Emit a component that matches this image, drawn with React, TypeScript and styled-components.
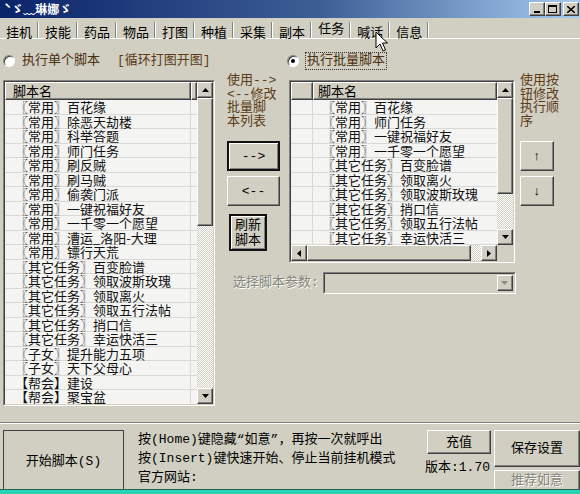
import styled, { createGlobalStyle, css } from 'styled-components'
import { Fragment } from 'react'

const BG = '#d1cfc1'

const GlobalStyle = createGlobalStyle`
  html, body {
    margin: 0;
    padding: 0;
    background: ${BG};
  }
  body {
    font-family: "Liberation Mono", "Noto Sans CJK SC", monospace;
    font-size: 13px;
    color: #000;
  }
  * {
    box-sizing: border-box;
  }
`

const raised = css`
  background: ${BG};
  border: 1px solid;
  border-color: #fff #404040 #404040 #fff;
  box-shadow: inset -1px -1px #808080, inset 1px 1px ${BG};
`

const Window = styled.div`
  position: relative;
  width: 580px;
  height: 494px;
  overflow: hidden;
  background: ${BG};
  display: flex;
  flex-direction: column;
`

const TitleBar = styled.div`
  height: 18px;
  display: flex;
  align-items: center;
  justify-content: space-between;
  padding: 0 1px 0 4px;
  background: linear-gradient(to right, #0a246a 0%, #3d5e95 55%, #a6caf0 100%);
`

const TitleText = styled.span`
  color: #fff;
  font-family: "Noto Sans CJK SC", sans-serif;
  font-weight: bold;
  font-size: 12px;
  line-height: 16px;
`

const WinButtons = styled.div`
  display: flex;
  align-items: center;
`

const WinBtn = styled.div<{ $gap?: boolean }>`
  ${raised};
  width: 16px;
  height: 14px;
  display: flex;
  align-items: center;
  justify-content: center;
  margin-left: ${(p) => (p.$gap ? '2px' : '0')};
`

const TabBar = styled.div`
  height: 21px;
  display: flex;
  align-items: flex-start;
  border-bottom: 1px solid #fff;
`

const Tab = styled.div<{ $active?: boolean }>`
  padding: 0 5px 0 6px;
  font-size: 13px;
  line-height: 16px;
  font-family: "Noto Sans CJK SC", sans-serif;
  margin-top: ${(p) => (p.$active ? '2px' : '6px')};
`

const TabSep = styled.div`
  width: 2px;
  height: 16px;
  border-left: 1px solid #808080;
  border-right: 1px solid #fff;
  margin-top: 4px;
`

const Main = styled.div`
  height: 367px;
  display: grid;
  grid-template-columns: 212px 74px 226px 1fr;
  grid-template-rows: 41px 183px 1fr;
  padding-left: 3px;
`

const RadioLine = styled.label<{ $col: string; $shift?: number }>`
  grid-column: ${(p) => p.$col};
  grid-row: 1;
  margin-left: ${(p) => p.$shift ?? 0}px;
  display: flex;
  align-items: center;
  gap: 7px;
  padding-top: 2px;
  color: #4a2e10;
  font-size: 13px;
  line-height: 16px;
`

const RadioDot = styled.span<{ $checked?: boolean }>`
  position: relative;
  flex-shrink: 0;
  width: 12px;
  height: 12px;
  border-radius: 50%;
  background: #fff;
  border: 1px solid;
  border-color: #808080 #fff #fff #808080;
  box-shadow: inset 1px 1px #404040;
  ${(p) =>
    p.$checked &&
    css`
      &::after {
        content: '';
        position: absolute;
        left: 3px;
        top: 3px;
        width: 4px;
        height: 4px;
        border-radius: 50%;
        background: #000;
      }
    `}
`

const Note = styled.span`
  margin-left: 10px;
  color: #5c3b17;
`

const Focused = styled.span`
  outline: 1px dotted #333;
  padding: 0 1px;
`

const ListBox = styled.div<{ $area: string; $h: number }>`
  grid-area: ${(p) => p.$area};
  height: ${(p) => p.$h}px;
  border: 1px solid;
  border-color: #808080 #fff #fff #808080;
  display: flex;
`

const ListInner = styled.div`
  flex: 1;
  min-width: 0;
  border: 1px solid;
  border-color: #404040 ${BG} ${BG} #404040;
  background: #f4f4f2;
  display: flex;
  flex-direction: column;
`

const ListTop = styled.div`
  flex: 1;
  min-height: 0;
  display: flex;
`

const ListMain = styled.div`
  flex: 1;
  min-width: 0;
  display: flex;
  flex-direction: column;
`

const HeaderRow = styled.div`
  height: 18px;
  display: flex;
  flex-shrink: 0;
`

const HeaderCell = styled.div<{ $w?: number; $pad?: number }>`
  ${raised};
  width: ${(p) => (p.$w ? `${p.$w}px` : 'auto')};
  flex: ${(p) => (p.$w ? '0 0 auto' : '1')};
  padding-left: ${(p) => p.$pad ?? 0}px;
  font-family: "Noto Sans CJK SC", sans-serif;
  font-size: 13px;
  line-height: 15px;
`

const Rows = styled.div`
  flex: 1;
  overflow: hidden;
`

const Row = styled.div`
  height: 14.5px;
  display: flex;
  border-bottom: 1px solid #d8d8d4;
  white-space: nowrap;
`

const RowHead = styled.div`
  width: 22px;
  flex-shrink: 0;
  border-right: 1px solid #d8d8d4;
`

const RowText = styled.div<{ $pad: number; $w?: number }>`
  padding-left: ${(p) => p.$pad}px;
  width: ${(p) => (p.$w ? `${p.$w}px` : 'auto')};
  flex: ${(p) => (p.$w ? '0 0 auto' : '1')};
  border-right: ${(p) => (p.$w ? '1px solid #d8d8d4' : 'none')};
  font-family: "Noto Sans CJK SC", sans-serif;
  font-size: 13px;
  line-height: 13.5px;
  color: #111;
`

const VScroll = styled.div`
  width: 16px;
  flex-shrink: 0;
  display: flex;
  flex-direction: column;
`

const HScroll = styled.div`
  height: 16px;
  flex-shrink: 0;
  display: flex;
`

const ScrollBtn = styled.div`
  ${raised};
  width: 16px;
  height: 16px;
  flex-shrink: 0;
  display: flex;
  align-items: center;
  justify-content: center;
`

const Thumb = styled.div<{ $size: number }>`
  ${raised};
  flex: 0 0 ${(p) => p.$size}px;
`

const Track = styled.div`
  flex: 1;
  background: repeating-conic-gradient(#fff 0 25%, ${BG} 0 50%) 0 0 / 2px 2px;
`

const Corner = styled.div`
  width: 16px;
  background: ${BG};
`

const MidCol = styled.div`
  grid-column: 2;
  grid-row: 1 / 3;
  padding: 35px 0 0 12px;
  display: flex;
  flex-direction: column;
  align-items: flex-start;
`

const Hint = styled.div<{ $w: number }>`
  color: #5c3b17;
  font-size: 13px;
  line-height: 13.5px;
  max-width: ${(p) => p.$w}px;
  word-break: break-all;
`

const PushButton = styled.div<{ $w: number; $h: number; $strong?: boolean; $mt: number; $ml?: number }>`
  ${raised};
  width: ${(p) => p.$w}px;
  height: ${(p) => p.$h}px;
  margin-top: ${(p) => p.$mt}px;
  margin-left: ${(p) => p.$ml ?? 0}px;
  flex-shrink: 0;
  display: flex;
  align-items: center;
  justify-content: center;
  text-align: center;
  font-size: 13px;
  line-height: 15px;
  ${(p) =>
    p.$strong &&
    css`
      border: 2px solid #111;
      box-shadow: inset 1px 1px #fff, inset -1px -1px #808080;
    `}
`

const SideCol = styled.div`
  grid-column: 4;
  grid-row: 1 / 3;
  padding: 35px 0 0 5px;
  display: flex;
  flex-direction: column;
  align-items: flex-start;
`

const ParamRow = styled.div`
  grid-column: 2 / 4;
  grid-row: 3;
  align-self: start;
  display: flex;
  align-items: center;
  padding: 9px 0 0 18px;
`

const Disabled = styled.span`
  flex-shrink: 0;
  white-space: nowrap;
  color: #85857a;
  text-shadow: 1px 1px #fff;
  font-size: 13px;
  line-height: 16px;
`

const Combo = styled.div`
  margin-left: 4px;
  width: 193px;
  flex-shrink: 0;
  height: 22px;
  border: 1px solid;
  border-color: #808080 #fff #fff #808080;
  display: flex;
`

const ComboInner = styled.div`
  flex: 1;
  border: 1px solid;
  border-color: #404040 ${BG} ${BG} #404040;
  display: flex;
  justify-content: flex-end;
  padding: 1px;
`

const Separator = styled.div`
  margin-top: 16px;
  height: 2px;
  border-top: 1px solid #808080;
  border-bottom: 1px solid #fff;
`

const Bottom = styled.div`
  height: 65px;
  display: flex;
  align-items: flex-start;
  padding: 6px 0 0 3px;
`

const StartBox = styled.div`
  width: 121px;
  height: 62px;
  border: 1px solid #404040;
  display: flex;
  align-items: center;
  justify-content: center;
  font-size: 13px;
  padding-bottom: 4px;
`

const Info = styled.div`
  flex: 1;
  margin-left: 14px;
  font-size: 13px;
  line-height: 19px;
  white-space: nowrap;
`

const ChargeCol = styled.div`
  width: 64px;
  display: flex;
  flex-direction: column;
  align-items: center;
`

const Version = styled.div`
  margin-top: 6px;
  margin-left: -3px;
  font-size: 13px;
  line-height: 16px;
`

const SaveCol = styled.div`
  width: 86px;
  margin-left: 3px;
  flex-shrink: 0;
  display: flex;
  flex-direction: column;
`

const Taskbar = styled.div`
  height: 5px;
  background: #27d3b3;
  border-top: 1px solid #22645a;
`

const Cursor = styled.svg`
  position: absolute;
  left: 375px;
  top: 31px;
`

type Dir = 'up' | 'down' | 'left' | 'right'

function Arrow({ dir, muted }: { dir: Dir; muted?: boolean }) {
  const vertical = dir === 'up' || dir === 'down'
  const pts = {
    up: '0,4 7,4 3.5,0',
    down: '0,0 7,0 3.5,4',
    left: '4,0 4,7 0,3.5',
    right: '0,0 0,7 4,3.5',
  }[dir]
  return (
    <svg width={vertical ? 7 : 4} height={vertical ? 4 : 7}>
      <polygon points={pts} fill={muted ? '#8a8a80' : '#000'} />
    </svg>
  )
}

const tabs = ['挂机', '技能', '药品', '物品', '打图', '种植', '采集', '副本', '任务', '喊话', '信息']

const allScripts = [
  '〖常用〗百花缘',
  '〖常用〗除恶天劫楼',
  '〖常用〗科举答题',
  '〖常用〗师门任务',
  '〖常用〗刷反贼',
  '〖常用〗刷马贼',
  '〖常用〗偷袭门派',
  '〖常用〗一键祝福好友',
  '〖常用〗一千零一个愿望',
  '〖常用〗漕运_洛阳-大理',
  '〖常用〗镖行天荒',
  '〖其它任务〗百变脸谱',
  '〖其它任务〗领取波斯玫瑰',
  '〖其它任务〗领取离火',
  '〖其它任务〗领取五行法帖',
  '〖其它任务〗捎口信',
  '〖其它任务〗幸运快活三',
  '〖子女〗提升能力五项',
  '〖子女〗天下父母心',
  '【帮会】建设',
  '【帮会】聚宝盆',
]

const batchScripts = [
  '〖常用〗百花缘',
  '〖常用〗师门任务',
  '〖常用〗一键祝福好友',
  '〖常用〗一千零一个愿望',
  '〖其它任务〗百变脸谱',
  '〖其它任务〗领取离火',
  '〖其它任务〗领取波斯玫瑰',
  '〖其它任务〗捎口信',
  '〖其它任务〗领取五行法帖',
  '〖其它任务〗幸运快活三',
]

export default function App() {
  return (
    <Window>
      <GlobalStyle />
      <TitleBar>
        <TitleText>ˋゞ﹏琳娜ゞ</TitleText>
        <WinButtons>
          <WinBtn>
            <svg width="8" height="8">
              <rect x="1" y="6" width="6" height="2" fill="#000" />
            </svg>
          </WinBtn>
          <WinBtn>
            <svg width="10" height="9">
              <rect x="0.5" y="0.5" width="8" height="7" fill="none" stroke="#000" />
              <rect x="0" y="0" width="9" height="2" fill="#000" />
            </svg>
          </WinBtn>
          <WinBtn $gap>
            <svg width="8" height="7">
              <path d="M0 0 L8 7 M8 0 L0 7" stroke="#000" strokeWidth="1.6" />
            </svg>
          </WinBtn>
        </WinButtons>
      </TitleBar>

      <TabBar>
        {tabs.map((t, i) => (
          <Fragment key={t}>
            <Tab $active={i === 8}>{t}</Tab>
            <TabSep />
          </Fragment>
        ))}
      </TabBar>

      <Main>
        <RadioLine $col="1 / 3">
          <RadioDot />
          <span>执行单个脚本</span>
          <Note>[循环打图开图]</Note>
        </RadioLine>
        <RadioLine $col="3" $shift={-2}>
          <RadioDot $checked />
          <Focused>执行批量脚本</Focused>
        </RadioLine>

        <ListBox $area="2 / 1 / 4 / 2" $h={326}>
          <ListInner>
            <ListTop>
              <ListMain>
                <HeaderRow>
                  <HeaderCell $w={186} $pad={7}>
                    脚本名
                  </HeaderCell>
                  <HeaderCell />
                </HeaderRow>
                <Rows>
                  {allScripts.map((s) => (
                    <Row key={s}>
                      <RowText $pad={10} $w={186}>
                        {s}
                      </RowText>
                    </Row>
                  ))}
                </Rows>
              </ListMain>
              <VScroll>
                <ScrollBtn>
                  <Arrow dir="up" />
                </ScrollBtn>
                <Thumb $size={128} />
                <Track />
                <ScrollBtn>
                  <Arrow dir="down" />
                </ScrollBtn>
              </VScroll>
            </ListTop>
          </ListInner>
        </ListBox>

        <MidCol>
          <Hint $w={50}>使用--&gt; &lt;--修改批量脚本列表</Hint>
          <PushButton $w={53} $h={30} $mt={13} $strong>
            --&gt;
          </PushButton>
          <PushButton $w={53} $h={30} $mt={5}>
            &lt;--
          </PushButton>
          <PushButton $w={38} $h={37} $mt={8} $ml={2} $strong>
            刷新
            <br />
            脚本
          </PushButton>
        </MidCol>

        <ListBox $area="2 / 3 / 3 / 4" $h={183}>
          <ListInner>
            <ListTop>
              <ListMain>
                <HeaderRow>
                  <HeaderCell $w={22} />
                  <HeaderCell $pad={4}>脚本名</HeaderCell>
                </HeaderRow>
                <Rows>
                  {batchScripts.map((s) => (
                    <Row key={s}>
                      <RowHead />
                      <RowText $pad={9}>{s}</RowText>
                    </Row>
                  ))}
                </Rows>
              </ListMain>
              <VScroll>
                <ScrollBtn>
                  <Arrow dir="up" />
                </ScrollBtn>
                <Thumb $size={96} />
                <Track />
                <ScrollBtn>
                  <Arrow dir="down" />
                </ScrollBtn>
              </VScroll>
            </ListTop>
            <HScroll>
              <ScrollBtn>
                <Arrow dir="left" />
              </ScrollBtn>
              <Thumb $size={164} />
              <Track />
              <ScrollBtn>
                <Arrow dir="right" />
              </ScrollBtn>
              <Corner />
            </HScroll>
          </ListInner>
        </ListBox>

        <SideCol>
          <Hint $w={40}>使用按钮修改执行顺序</Hint>
          <PushButton $w={34} $h={30} $mt={13}>
            ↑
          </PushButton>
          <PushButton $w={34} $h={30} $mt={5}>
            ↓
          </PushButton>
        </SideCol>

        <ParamRow>
          <Disabled>选择脚本参数:</Disabled>
          <Combo>
            <ComboInner>
              <ScrollBtn>
                <Arrow dir="down" muted />
              </ScrollBtn>
            </ComboInner>
          </Combo>
        </ParamRow>
      </Main>

      <Separator />

      <Bottom>
        <StartBox>开始脚本(S)</StartBox>
        <Info>
          <div>按(Home)键隐藏“如意”，再按一次就呼出</div>
          <div>按(Insert)键快速开始、停止当前挂机模式</div>
          <div>官方网站:</div>
        </Info>
        <ChargeCol>
          <PushButton $w={64} $h={24} $mt={0}>
            充值
          </PushButton>
          <Version>版本:1.70</Version>
        </ChargeCol>
        <SaveCol>
          <PushButton $w={86} $h={37} $mt={0}>
            保存设置
          </PushButton>
          <PushButton $w={86} $h={21} $mt={3}>
            <Disabled>推荐如意</Disabled>
          </PushButton>
        </SaveCol>
      </Bottom>

      <Taskbar />

      <Cursor width="14" height="22" viewBox="0 0 14 22">
        <path d="M1 1 L1 17 L5 13 L8 20 L10.5 19 L7.5 12 L12.5 12 Z" fill="#fff" stroke="#000" strokeWidth="1" />
      </Cursor>
    </Window>
  )
}
